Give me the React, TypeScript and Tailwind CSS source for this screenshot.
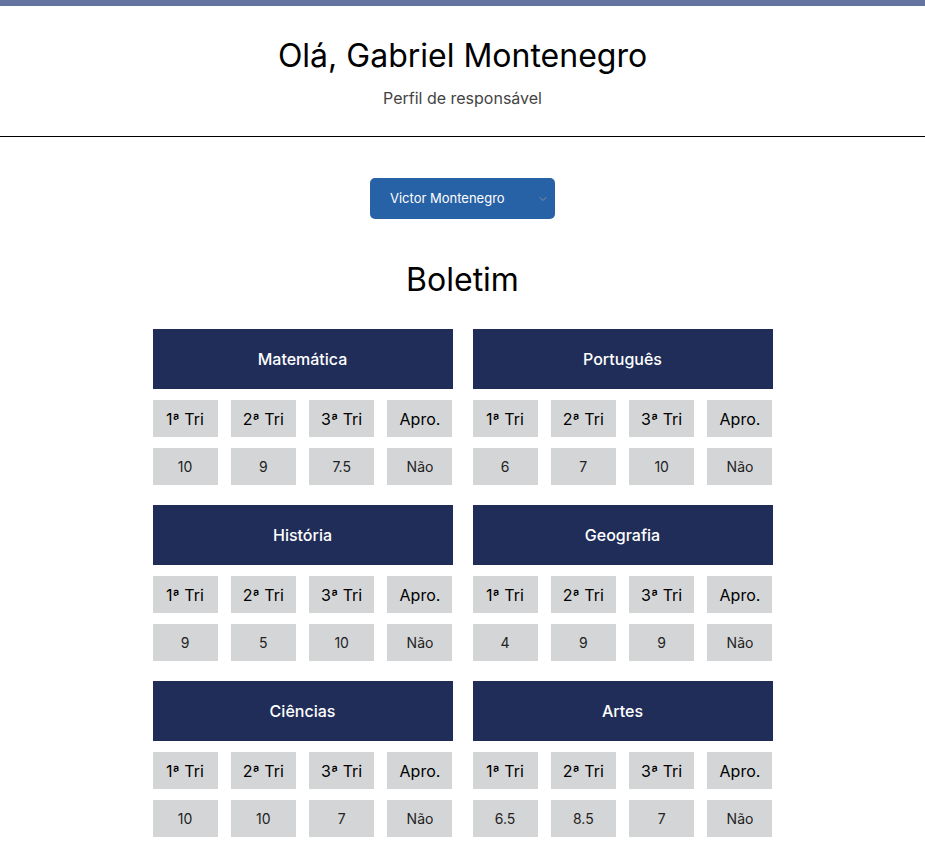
import { ChevronDown } from "lucide-react";

interface Subject {
  name: string;
  grades: string[];
}

const subjects: Subject[] = [
  { name: "Matemática", grades: ["10", "9", "7.5", "Não"] },
  { name: "Português", grades: ["6", "7", "10", "Não"] },
  { name: "História", grades: ["9", "5", "10", "Não"] },
  { name: "Geografia", grades: ["4", "9", "9", "Não"] },
  { name: "Ciências", grades: ["10", "10", "7", "Não"] },
  { name: "Artes", grades: ["6.5", "8.5", "7", "Não"] },
];

const heads = ["1ª Tri", "2ª Tri", "3ª Tri", "Apro."];

const SubjectCard = ({ subject }: { subject: Subject }) => (
  <div className="w-[300px]">
    <div className="h-[60px] bg-[#1f2d58] text-white text-[16px] font-medium flex items-center justify-center">
      {subject.name}
    </div>
    <div className="mt-[11px] flex justify-between">
      {heads.map((h) => (
        <div
          key={h}
          className="w-[65px] h-[37px] bg-[#d4d5d7] flex items-center justify-center text-[16px] text-black"
        >
          {h}
        </div>
      ))}
    </div>
    <div className="mt-[11px] flex justify-between">
      {subject.grades.map((g, i) => (
        <div
          key={i}
          className="w-[65px] h-[37px] bg-[#d4d5d7] flex items-center justify-center text-[14px] text-[#222]"
        >
          {g}
        </div>
      ))}
    </div>
  </div>
);

export default function App() {
  return (
    <div className="min-h-screen bg-white font-['Inter',sans-serif]">
      <div className="h-[6px] bg-[#6474a0]" />
      <header className="pt-[31px] pb-[28px] border-b border-black text-center">
        <h1 className="text-[32px] leading-[38px] text-black">
          Olá, Gabriel Montenegro
        </h1>
        <p className="mt-[13px] text-[16px] leading-[20px] text-[#444]">
          Perfil de responsável
        </p>
      </header>

      <div className="mt-[41px] flex justify-center">
        <div className="w-[185px] h-[41px] rounded-[5px] bg-[#2761a6] flex items-center pl-[20px] pr-[6px] pt-px text-white text-[13px]">
          <span className="flex-1">Victor Montenegro</span>
          <ChevronDown size={12} className="text-[#8a8f9a]" strokeWidth={2} />
        </div>
      </div>

      <h2 className="mt-[42px] text-center text-[32px] leading-[38px] text-black">
        Boletim
      </h2>

      <div className="mt-[30px] mx-auto w-[620px] grid grid-cols-2 gap-x-[20px] gap-y-[20px] pb-8">
        {subjects.map((s) => (
          <SubjectCard key={s.name} subject={s} />
        ))}
      </div>
    </div>
  );
}
